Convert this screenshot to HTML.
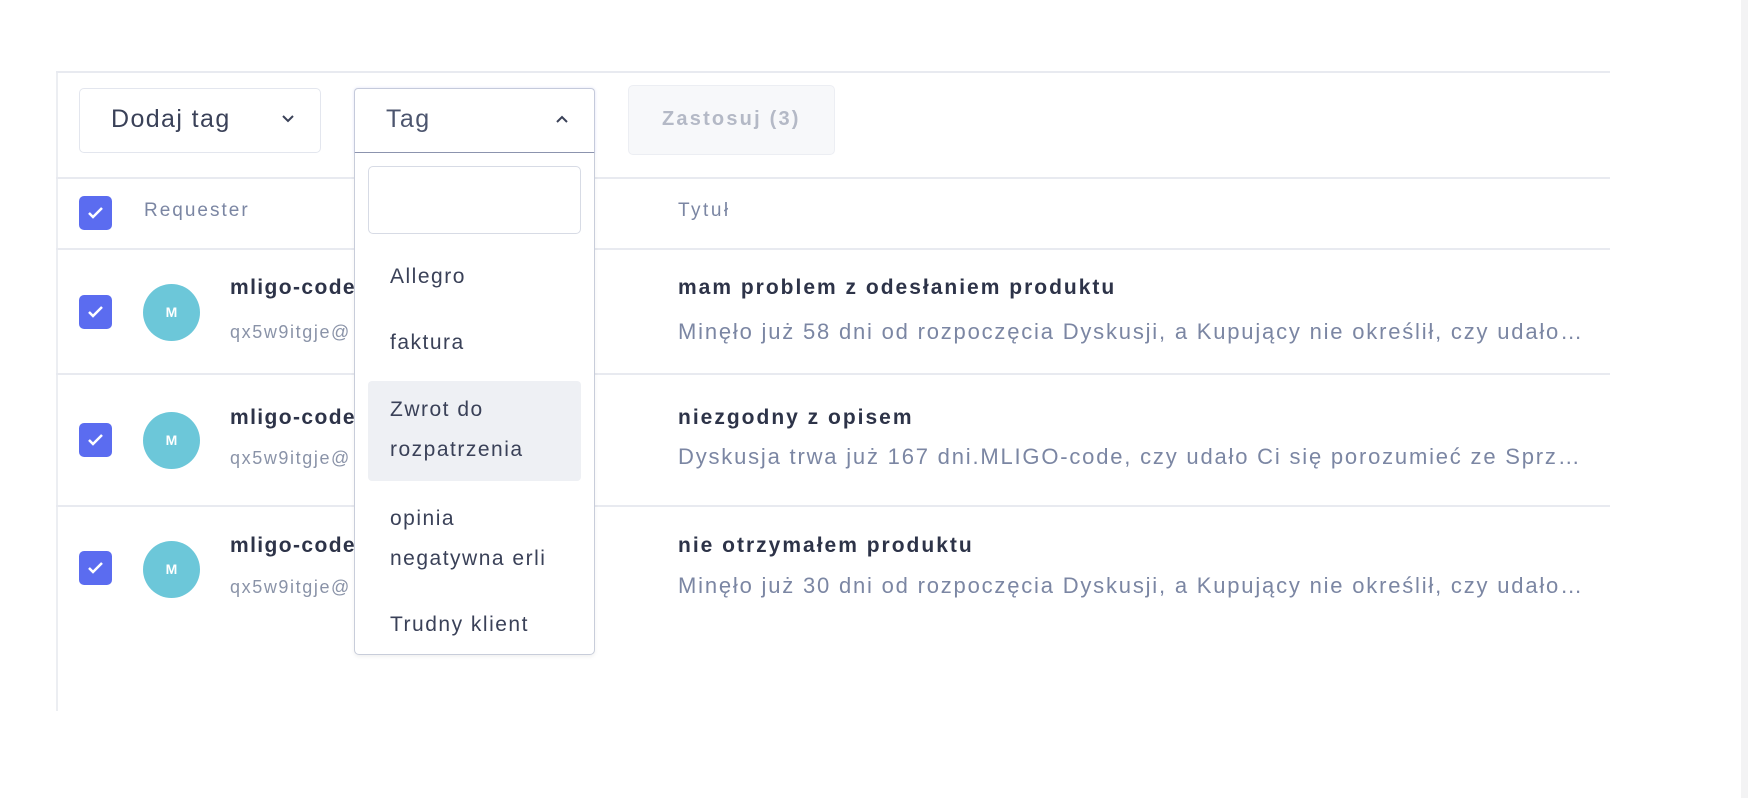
<!DOCTYPE html>
<html><head><meta charset="utf-8"><style>
*{box-sizing:border-box;margin:0;padding:0}
body{width:1748px;height:798px;background:#fff;position:relative;overflow:hidden;font-family:"Liberation Sans",sans-serif;letter-spacing:1.4px}
.abs{position:absolute}
.hl{position:absolute;left:56px;width:1554px;height:2px;background:#e8eaf0}
.cb{position:absolute;width:33px;height:34px;background:#5b6cf0;border-radius:5px}
.cb svg{position:absolute;left:8px;top:9px}
.av{position:absolute;left:143px;width:57px;height:57px;border-radius:50%;background:#6cc7d9;color:#fff;font-size:14px;font-weight:bold;text-align:center;line-height:57px;letter-spacing:0}
.name{position:absolute;left:230px;font-size:21px;font-weight:bold;color:#2d3348;width:124px;overflow:hidden;white-space:nowrap}
.mail{position:absolute;left:230px;font-size:18px;color:#8a93a8;width:124px;overflow:hidden;white-space:nowrap;letter-spacing:1.6px}
.ti{position:absolute;left:678px;font-size:21px;font-weight:bold;color:#2d3348;white-space:nowrap;letter-spacing:2px}
.de{position:absolute;left:678px;font-size:22px;color:#7b86a3;white-space:nowrap;letter-spacing:1.8px}
.de span{letter-spacing:0}
.it{position:absolute;left:390px;font-size:21px;color:#3a4158;line-height:40px;letter-spacing:1.5px}
</style></head><body>
<div class="abs" style="left:1741px;top:0;width:7px;height:798px;background:#f3f3f4"></div>
<div class="abs" style="left:56px;top:71px;width:2px;height:640px;background:#eceef2"></div>
<div class="hl" style="top:71px"></div>
<div class="hl" style="top:177px"></div>
<div class="hl" style="top:248px"></div>
<div class="hl" style="top:373px"></div>
<div class="hl" style="top:505px"></div>

<div class="abs" style="left:79px;top:88px;width:242px;height:65px;border:1.5px solid #e3e6ee;border-radius:5px"></div>
<div class="abs" style="left:111px;top:105px;font-size:25px;color:#3a4158">Dodaj tag</div>
<svg class="abs" style="left:281px;top:114px" width="14" height="10"><path d="M2 2l5 5 5-5" fill="none" stroke="#3a4158" stroke-width="2"/></svg>

<div class="abs" style="left:354px;top:88px;width:241px;height:66px;border:1.5px solid #c5cadb;border-bottom:2px solid #8d95b0;border-radius:4px 4px 0 0;box-shadow:0 0 3px #dfe3f5"></div>
<div class="abs" style="left:386px;top:105px;font-size:25px;color:#4c556e">Tag</div>
<svg class="abs" style="left:555px;top:114px" width="14" height="10"><path d="M2 8l5-5 5 5" fill="none" stroke="#3a4158" stroke-width="2"/></svg>

<div class="abs" style="left:628px;top:85px;width:207px;height:70px;border:1.5px solid #eceef3;background:#f7f8fa;border-radius:5px"></div>
<div class="abs" style="left:662px;top:108px;font-size:20px;font-weight:bold;color:#b4b9c6;letter-spacing:2.2px">Zastosuj (3)</div>

<div class="cb" style="left:79px;top:196px"><svg width="17" height="15"><path d="M2 8l4 4 9-9" fill="none" stroke="#fff" stroke-width="2.5"/></svg></div>
<div class="abs" style="left:144px;top:200px;font-size:19px;color:#7b86a3;letter-spacing:2px">Requester</div>
<div class="abs" style="left:678px;top:200px;font-size:19px;color:#7b86a3;letter-spacing:2.5px">Tytuł</div>

<div class="cb" style="left:79px;top:295px"><svg width="17" height="15"><path d="M2 8l4 4 9-9" fill="none" stroke="#fff" stroke-width="2.5"/></svg></div>
<div class="av" style="top:284px">M</div>
<div class="name" style="top:276px">mligo-code</div>
<div class="mail" style="top:322px">qx5w9itgje@</div>
<div class="ti" style="top:276px">mam problem z odesłaniem produktu</div>
<div class="de" style="top:319px">Minęło już 58 dni od rozpoczęcia Dyskusji, a Kupujący nie określił, czy udało<span>…</span></div>

<div class="cb" style="left:79px;top:423px"><svg width="17" height="15"><path d="M2 8l4 4 9-9" fill="none" stroke="#fff" stroke-width="2.5"/></svg></div>
<div class="av" style="top:412px">M</div>
<div class="name" style="top:406px">mligo-code</div>
<div class="mail" style="top:448px">qx5w9itgje@</div>
<div class="ti" style="top:406px">niezgodny z opisem</div>
<div class="de" style="top:444px">Dyskusja trwa już 167 dni.MLIGO-code, czy udało Ci się porozumieć ze Sprz<span>…</span></div>

<div class="cb" style="left:79px;top:551px"><svg width="17" height="15"><path d="M2 8l4 4 9-9" fill="none" stroke="#fff" stroke-width="2.5"/></svg></div>
<div class="av" style="top:541px">M</div>
<div class="name" style="top:534px">mligo-code</div>
<div class="mail" style="top:577px">qx5w9itgje@</div>
<div class="ti" style="top:534px">nie otrzymałem produktu</div>
<div class="de" style="top:573px">Minęło już 30 dni od rozpoczęcia Dyskusji, a Kupujący nie określił, czy udało<span>…</span></div>

<div class="abs" style="left:354px;top:153px;width:241px;height:502px;background:#fff;border:1.5px solid #c8cdda;border-top:none;border-radius:0 0 5px 5px;box-shadow:0 2px 4px rgba(0,0,0,.06)"></div>
<div class="abs" style="left:368px;top:166px;width:213px;height:68px;border:1.5px solid #d7dbe5;border-radius:5px"></div>
<div class="it" style="top:257px">Allegro</div>
<div class="it" style="top:323px">faktura</div>
<div class="abs" style="left:368px;top:381px;width:213px;height:100px;background:#eef0f4;border-radius:4px"></div>
<div class="it" style="top:390px">Zwrot do<br>rozpatrzenia</div>
<div class="it" style="top:499px">opinia<br>negatywna erli</div>
<div class="it" style="top:605px">Trudny klient</div>
</body></html>
